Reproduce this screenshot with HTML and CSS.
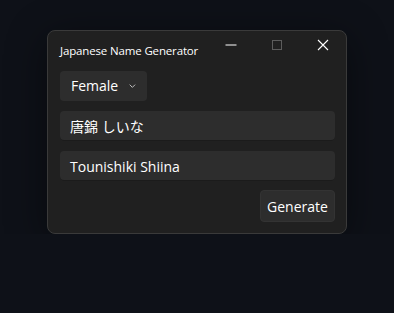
FILE: index.html
```html
<!DOCTYPE html>
<html lang="en">
<head>
    <meta charset="UTF-8">
    <meta name="viewport" content="width=device-width, initial-scale=1.0">
    <title>Japanese Name Generator</title>
    <link rel="stylesheet" href="styles.css">
</head>
<body>
    <div class="window">
        <div class="titlebar">
            <span class="title">Japanese Name Generator</span>
            <div class="captions">
                <div class="caption">
                    <svg width="12" height="12" viewBox="0 0 12 12"><path d="M0.5 6h11" stroke="#fff" stroke-width="1"/></svg>
                </div>
                <div class="caption">
                    <svg width="12" height="12" viewBox="0 0 12 12"><rect x="1.5" y="1.5" width="9" height="9" fill="none" stroke="#5c5c5c" stroke-width="1"/></svg>
                </div>
                <div class="caption">
                    <svg width="12" height="12" viewBox="0 0 12 12"><path d="M1 1l10 10M11 1L1 11" stroke="#fff" stroke-width="1.1"/></svg>
                </div>
            </div>
        </div>
        <div class="content">
            <div class="combo">
                <span>Female</span>
                <svg class="chevron" width="10" height="6" viewBox="0 0 10 6"><path d="M1 1l4 4 4-4" fill="none" stroke="#e0e0e0" stroke-width="1.2"/></svg>
            </div>
            <div class="textbox">唐錦 しいな</div>
            <div class="textbox">Tounishiki Shiina</div>
            <div class="actions">
                <div class="button">Generate</div>
            </div>
        </div>
    </div>
</body>
</html>
```

FILE: styles.css
```css
body {
    margin: 0;
    background-color: #0e1118;
    font-family: "Open Sans", "Noto Sans CJK JP", sans-serif;
    color: #ffffff;
}
.window {
    margin: 30px 0 0 47px;
    width: 298px;
    height: 202px;
    background-color: #202020;
    border: 1px solid #3a3a3a;
    border-radius: 8px;
    box-shadow: 0 8px 40px rgba(0, 0, 0, 0.45);
}
.titlebar {
    display: flex;
    justify-content: space-between;
    height: 40px;
}
.title {
    font-size: 11.5px;
    padding: 12px 0 0 12px;
    letter-spacing: -0.15px;
}
.captions {
    display: flex;
}
.caption {
    width: 46px;
    height: 28px;
    display: flex;
    align-items: center;
    justify-content: center;
}
.content {
    padding: 0 11px 0 12px;
    display: flex;
    flex-direction: column;
    gap: 10px;
}
.combo {
    width: 87px;
    height: 30px;
    box-sizing: border-box;
    background-color: #2d2d2d;
    border-radius: 4px;
    display: flex;
    align-items: center;
    padding: 0 11px 2px;
    gap: 11px;
    font-size: 14px;
}
.chevron {
    margin-top: 2px;
}
.textbox {
    height: 30px;
    box-sizing: border-box;
    background-color: #2d2d2d;
    border-radius: 4px;
    box-shadow: inset 0 -1px 0 #1b1b1b;
    padding: 0 10px;
    display: flex;
    align-items: center;
    font-size: 14px;
}
.actions {
    display: flex;
    justify-content: flex-end;
    margin-top: -1px;
}
.button {
    width: 75px;
    height: 32px;
    box-sizing: border-box;
    background-color: #2d2d2d;
    border: 1px solid #333333;
    border-radius: 4px;
    display: flex;
    align-items: center;
    justify-content: center;
    font-size: 14px;
}
```
